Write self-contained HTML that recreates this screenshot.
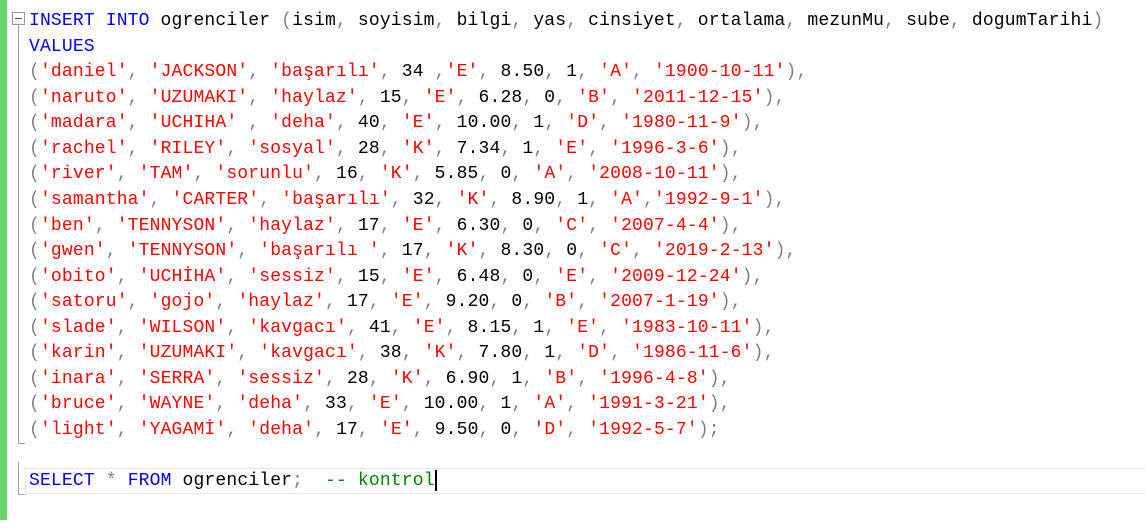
<!DOCTYPE html>
<html><head><meta charset="utf-8"><style>
body{margin:0;width:1145px;height:528px;background:#fff;overflow:hidden;position:relative;font-family:"Liberation Mono","DejaVu Sans Mono",monospace;}
.g{position:absolute;left:0;top:0;width:7px;height:520px;background:#6ed36e;}
.box{position:absolute;left:12px;top:12px;width:11px;height:11px;border:1px solid #999;background:#fff;}
.box:after{content:"";position:absolute;left:2px;top:5px;width:7px;height:1px;background:#555;}
.vl{position:absolute;left:18px;width:1px;background:#a0a0a0;}
.tk{position:absolute;left:18px;width:7px;height:1px;background:#a0a0a0;}
.cur{position:absolute;left:25px;top:468px;width:1130px;height:24px;border:1px solid #e6e6e6;}
pre{position:absolute;left:29px;top:9px;margin:0;font-size:18px;letter-spacing:0.16px;line-height:25.56px;color:#000;font-family:inherit;}
.k{color:#0000ff}.s{color:#ff0000}.p{color:#808080}.c{color:#008000}
.caret{position:absolute;left:435px;top:470px;width:2px;height:21px;background:#000;}
</style></head><body>
<div class="g"></div>
<div class="box"></div>
<div class="vl" style="top:25px;height:418px"></div>
<div class="tk" style="top:443px"></div>
<div class="vl" style="top:462px;height:32px"></div>
<div class="tk" style="top:494px"></div>
<div class="cur"></div>
<pre><span class="k">INSERT INTO</span> ogrenciler <span class="p">(</span>isim<span class="p">,</span> soyisim<span class="p">,</span> bilgi<span class="p">,</span> yas<span class="p">,</span> cinsiyet<span class="p">,</span> ortalama<span class="p">,</span> mezunMu<span class="p">,</span> sube<span class="p">,</span> dogumTarihi<span class="p">)</span>
<span class="k">VALUES</span>
<span class="p">(</span><span class="s">'daniel'</span><span class="p">,</span> <span class="s">'JACKSON'</span><span class="p">,</span> <span class="s">'başarılı'</span><span class="p">,</span> 34 <span class="p">,</span><span class="s">'E'</span><span class="p">,</span> 8.50<span class="p">,</span> 1<span class="p">,</span> <span class="s">'A'</span><span class="p">,</span> <span class="s">'1900-10-11'</span><span class="p">),</span>
<span class="p">(</span><span class="s">'naruto'</span><span class="p">,</span> <span class="s">'UZUMAKI'</span><span class="p">,</span> <span class="s">'haylaz'</span><span class="p">,</span> 15<span class="p">,</span> <span class="s">'E'</span><span class="p">,</span> 6.28<span class="p">,</span> 0<span class="p">,</span> <span class="s">'B'</span><span class="p">,</span> <span class="s">'2011-12-15'</span><span class="p">),</span>
<span class="p">(</span><span class="s">'madara'</span><span class="p">,</span> <span class="s">'UCHIHA'</span> <span class="p">,</span> <span class="s">'deha'</span><span class="p">,</span> 40<span class="p">,</span> <span class="s">'E'</span><span class="p">,</span> 10.00<span class="p">,</span> 1<span class="p">,</span> <span class="s">'D'</span><span class="p">,</span> <span class="s">'1980-11-9'</span><span class="p">),</span>
<span class="p">(</span><span class="s">'rachel'</span><span class="p">,</span> <span class="s">'RILEY'</span><span class="p">,</span> <span class="s">'sosyal'</span><span class="p">,</span> 28<span class="p">,</span> <span class="s">'K'</span><span class="p">,</span> 7.34<span class="p">,</span> 1<span class="p">,</span> <span class="s">'E'</span><span class="p">,</span> <span class="s">'1996-3-6'</span><span class="p">),</span>
<span class="p">(</span><span class="s">'river'</span><span class="p">,</span> <span class="s">'TAM'</span><span class="p">,</span> <span class="s">'sorunlu'</span><span class="p">,</span> 16<span class="p">,</span> <span class="s">'K'</span><span class="p">,</span> 5.85<span class="p">,</span> 0<span class="p">,</span> <span class="s">'A'</span><span class="p">,</span> <span class="s">'2008-10-11'</span><span class="p">),</span>
<span class="p">(</span><span class="s">'samantha'</span><span class="p">,</span> <span class="s">'CARTER'</span><span class="p">,</span> <span class="s">'başarılı'</span><span class="p">,</span> 32<span class="p">,</span> <span class="s">'K'</span><span class="p">,</span> 8.90<span class="p">,</span> 1<span class="p">,</span> <span class="s">'A'</span><span class="p">,</span><span class="s">'1992-9-1'</span><span class="p">),</span>
<span class="p">(</span><span class="s">'ben'</span><span class="p">,</span> <span class="s">'TENNYSON'</span><span class="p">,</span> <span class="s">'haylaz'</span><span class="p">,</span> 17<span class="p">,</span> <span class="s">'E'</span><span class="p">,</span> 6.30<span class="p">,</span> 0<span class="p">,</span> <span class="s">'C'</span><span class="p">,</span> <span class="s">'2007-4-4'</span><span class="p">),</span>
<span class="p">(</span><span class="s">'gwen'</span><span class="p">,</span> <span class="s">'TENNYSON'</span><span class="p">,</span> <span class="s">'başarılı '</span><span class="p">,</span> 17<span class="p">,</span> <span class="s">'K'</span><span class="p">,</span> 8.30<span class="p">,</span> 0<span class="p">,</span> <span class="s">'C'</span><span class="p">,</span> <span class="s">'2019-2-13'</span><span class="p">),</span>
<span class="p">(</span><span class="s">'obito'</span><span class="p">,</span> <span class="s">'UCHİHA'</span><span class="p">,</span> <span class="s">'sessiz'</span><span class="p">,</span> 15<span class="p">,</span> <span class="s">'E'</span><span class="p">,</span> 6.48<span class="p">,</span> 0<span class="p">,</span> <span class="s">'E'</span><span class="p">,</span> <span class="s">'2009-12-24'</span><span class="p">),</span>
<span class="p">(</span><span class="s">'satoru'</span><span class="p">,</span> <span class="s">'gojo'</span><span class="p">,</span> <span class="s">'haylaz'</span><span class="p">,</span> 17<span class="p">,</span> <span class="s">'E'</span><span class="p">,</span> 9.20<span class="p">,</span> 0<span class="p">,</span> <span class="s">'B'</span><span class="p">,</span> <span class="s">'2007-1-19'</span><span class="p">),</span>
<span class="p">(</span><span class="s">'slade'</span><span class="p">,</span> <span class="s">'WILSON'</span><span class="p">,</span> <span class="s">'kavgacı'</span><span class="p">,</span> 41<span class="p">,</span> <span class="s">'E'</span><span class="p">,</span> 8.15<span class="p">,</span> 1<span class="p">,</span> <span class="s">'E'</span><span class="p">,</span> <span class="s">'1983-10-11'</span><span class="p">),</span>
<span class="p">(</span><span class="s">'karin'</span><span class="p">,</span> <span class="s">'UZUMAKI'</span><span class="p">,</span> <span class="s">'kavgacı'</span><span class="p">,</span> 38<span class="p">,</span> <span class="s">'K'</span><span class="p">,</span> 7.80<span class="p">,</span> 1<span class="p">,</span> <span class="s">'D'</span><span class="p">,</span> <span class="s">'1986-11-6'</span><span class="p">),</span>
<span class="p">(</span><span class="s">'inara'</span><span class="p">,</span> <span class="s">'SERRA'</span><span class="p">,</span> <span class="s">'sessiz'</span><span class="p">,</span> 28<span class="p">,</span> <span class="s">'K'</span><span class="p">,</span> 6.90<span class="p">,</span> 1<span class="p">,</span> <span class="s">'B'</span><span class="p">,</span> <span class="s">'1996-4-8'</span><span class="p">),</span>
<span class="p">(</span><span class="s">'bruce'</span><span class="p">,</span> <span class="s">'WAYNE'</span><span class="p">,</span> <span class="s">'deha'</span><span class="p">,</span> 33<span class="p">,</span> <span class="s">'E'</span><span class="p">,</span> 10.00<span class="p">,</span> 1<span class="p">,</span> <span class="s">'A'</span><span class="p">,</span> <span class="s">'1991-3-21'</span><span class="p">),</span>
<span class="p">(</span><span class="s">'light'</span><span class="p">,</span> <span class="s">'YAGAMİ'</span><span class="p">,</span> <span class="s">'deha'</span><span class="p">,</span> 17<span class="p">,</span> <span class="s">'E'</span><span class="p">,</span> 9.50<span class="p">,</span> 0<span class="p">,</span> <span class="s">'D'</span><span class="p">,</span> <span class="s">'1992-5-7'</span><span class="p">);</span>

<span class="k">SELECT</span> <span class="p">*</span> <span class="k">FROM</span> ogrenciler<span class="p">;</span>  <span class="c">-- kontrol</span></pre>
<div class="caret"></div>
</body></html>
